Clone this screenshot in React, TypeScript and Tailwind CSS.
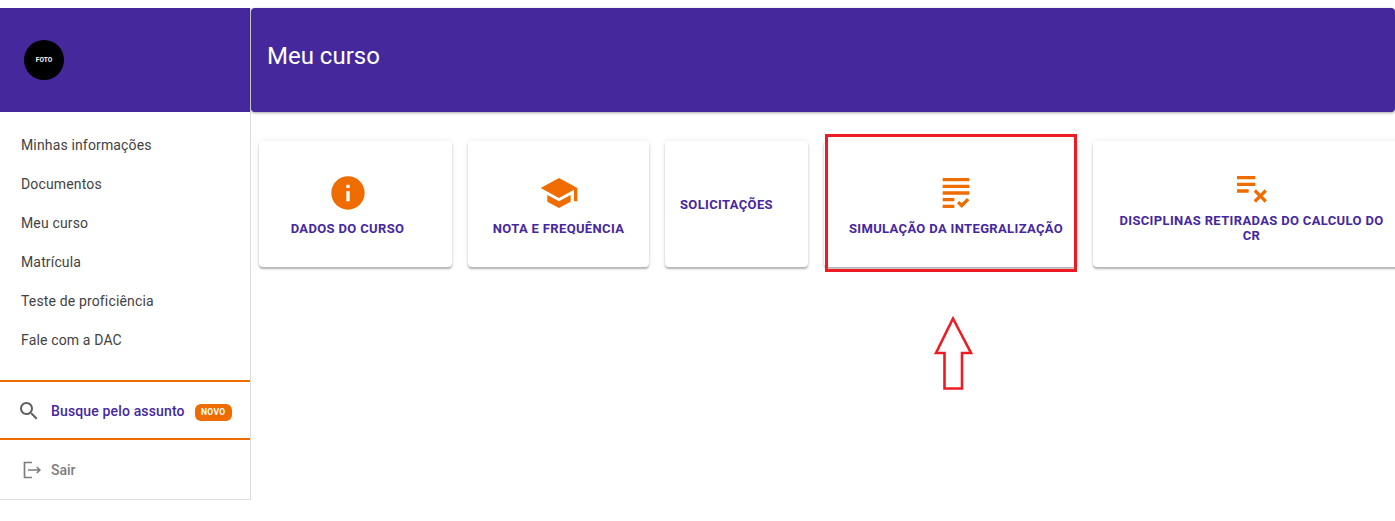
const NAV = ["Minhas informações", "Documentos", "Meu curso", "Matrícula", "Teste de proficiência", "Fale com a DAC"];

function Icon({ d, className = "" }: { d: string; className?: string }) {
  return (
    <svg viewBox="0 0 24 24" className={"h-10 w-10 shrink-0 fill-[#ef6c00] " + className}>
      <path d={d} />
    </svg>
  );
}

const INFO = "M12 2C6.48 2 2 6.48 2 12s4.48 10 10 10 10-4.48 10-10S17.52 2 12 2zm1 15h-2v-6h2v6zm0-8h-2V7h2v2z";
const SCHOOL = "M5 13.18v4L12 21l7-3.82v-4L12 17l-7-3.82zM12 3 1 9l11 6 9-4.91V17h2V9L12 3z";
const GRADING = "M4 7h16v2H4V7zM4 13h16v-2H4v2zM4 17h7v-2H4v2zM4 21h7v-2H4v2zM15.41 18.17 14 16.75l-1.41 1.41L15.41 21 20 16.42 18.59 15l-3.18 3.17zM4 3v2h16V3H4z";
const REMOVE = "M14 10H3v2h11v-2zm0-4H3v2h11V6zM3 16h7v-2H3v2zm11.41 6L17 19.41 19.59 22 21 20.59 18.41 18 21 15.41 19.59 14 17 16.59 14.41 14 13 15.41 15.59 18 13 20.59 14.41 22z";

function Card({ label, icon, className, iconGap = "mb-[8px]" }: { label: string; icon?: string; className: string; iconGap?: string }) {
  return (
    <div className={"flex h-[126px] shrink-0 flex-col justify-center rounded bg-white pt-[1px] shadow-[0_2px_2px_rgba(0,0,0,0.28),0_0_6px_rgba(0,0,0,0.08)] " + className}>
      {icon && <Icon d={icon} className={iconGap} />}
      <span className="text-[13px] leading-[15px] font-bold tracking-[0.35px] text-[#4527a0]">{label}</span>
    </div>
  );
}

export default function App() {
  return (
    <div className="relative h-[521px] w-[1395px] overflow-hidden bg-white pt-2 font-['Roboto',sans-serif]">
      <div className="flex h-[492px]">
        <aside className="flex w-[251px] shrink-0 flex-col border-r border-b border-[#dedede]">
          <div className="flex h-[104px] items-center bg-[#45299c] pl-6">
            <div className="flex h-10 w-10 items-center justify-center rounded-full bg-black pt-[1px] text-[6.5px] font-bold text-white">FOTO</div>
          </div>
          <nav className="flex flex-col pt-[14px]">
            {NAV.map((item) => (
              <div key={item} className="flex h-[39px] items-center pl-[21px] text-[14px] tracking-[0.15px] text-[#424242]">{item}</div>
            ))}
          </nav>
          <div className="mt-5 flex h-[60px] items-center border-y-2 border-[#ef6c00] pt-[2px] pl-[17px]">
            <svg viewBox="0 0 24 24" className="h-6 w-6 shrink-0 fill-[#616161]">
              <path d="M15.5 14h-.79l-.28-.27C15.41 12.59 16 11.11 16 9.5 16 5.91 13.09 3 9.5 3S3 5.91 3 9.5 5.91 16 9.5 16c1.61 0 3.09-.59 4.23-1.57l.27.28v.79l5 4.99L20.49 19l-4.99-5zm-6 0C7.01 14 5 11.99 5 9.5S7.01 5 9.5 5 14 7.01 14 9.5 11.99 14 9.5 14z" />
            </svg>
            <span className="ml-[10px] text-[14px] font-medium tracking-[0.15px] text-[#4527a0]">Busque pelo assunto</span>
            <span className="mt-[3px] ml-[10px] flex h-[17px] w-[37px] items-center justify-center rounded-md bg-[#ef6c00] text-[8.5px] font-bold tracking-[0.3px] text-white">NOVO</span>
          </div>
          <div className="flex flex-1 items-center pt-[1px] pl-[19px]">
            <svg viewBox="0 0 24 24" fill="none" stroke="#7d7d7d" strokeWidth="1.7" className="h-6 w-6 shrink-0">
              <path d="M13 4.500H5.500v15H13" />
              <path d="M9 12h11.500M17.800 9l3 3-3 3" />
            </svg>
            <span className="ml-2 text-[14px] font-medium text-[#7c7c7c]">Sair</span>
          </div>
        </aside>
        <main className="min-w-0 flex-1">
          <header className="flex h-[104px] items-center rounded bg-[#45299c] pb-[9px] pl-4 text-[24px] text-white shadow-[0_1px_3px_rgba(0,0,0,0.35)]">Meu curso</header>
          <div className="mt-[29px] flex gap-4 pl-2">
            <Card label="DADOS DO CURSO" icon={INFO} className="w-[193px] items-center pr-4" />
            <Card label="NOTA E FREQUÊNCIA" icon={SCHOOL} className="w-[181px] items-center" />
            <Card label="SOLICITAÇÕES" className="w-[143px] items-start pl-[15px]" />
            <Card label="SIMULAÇÃO DA INTEGRALIZAÇÃO" icon={GRADING} className="w-[253px] items-center pl-[11px]" />
            <Card label="DISCIPLINAS RETIRADAS DO CALCULO DO CR" icon={REMOVE} iconGap="mb-[7px]" className="w-[317px] items-center px-[24px] text-center" />
          </div>
        </main>
      </div>
      <div className="absolute top-[134px] left-[825px] h-[138px] w-[252px] border-[3px] border-[#ed1c24]" />
      <svg viewBox="0 0 50 84" className="absolute top-[312px] left-[928px] h-[84px] w-[50px]" fill="none" stroke="#ed1c24" strokeWidth="2.6">
        <path d="M25 6.500 8 41h8.500v35.500h17.500V41H43z" />
      </svg>
    </div>
  );
}
